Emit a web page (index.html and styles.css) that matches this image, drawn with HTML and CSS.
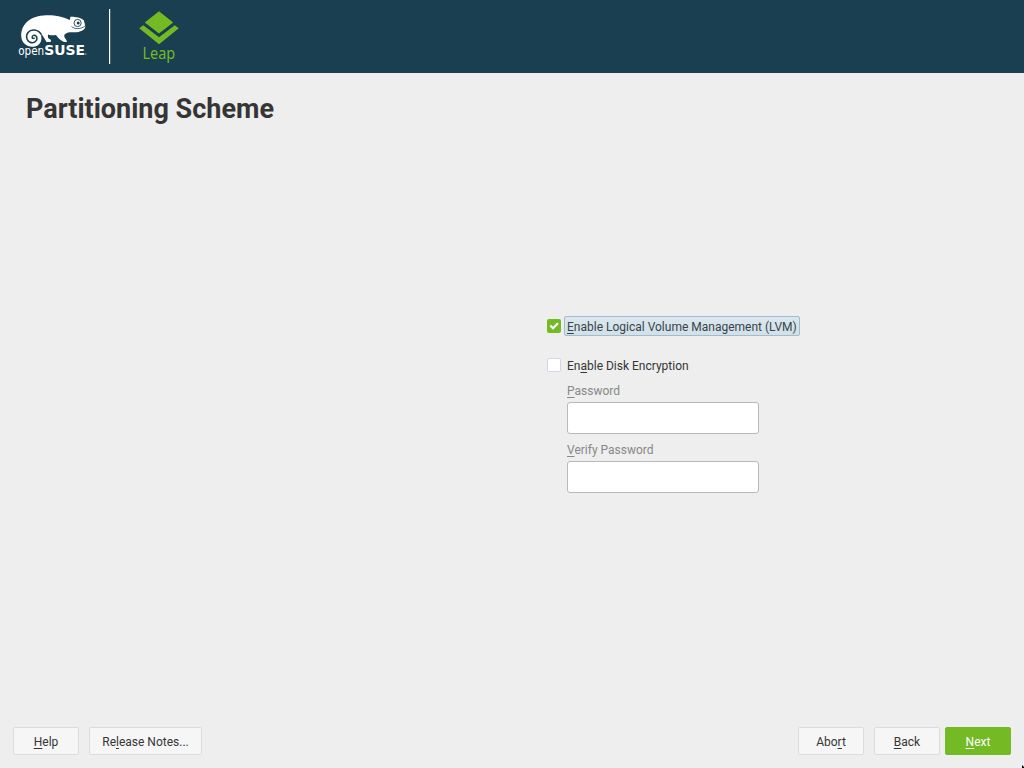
FILE: index.html
```html
<!DOCTYPE html>
<html lang="en">
<head>
<meta charset="utf-8">
<title>Partitioning Scheme</title>
<link rel="stylesheet" href="styles.css">
</head>
<body>
<header class="banner">
  <svg class="brand" width="200" height="72" viewBox="0 0 200 72" role="img" aria-label="openSUSE Leap">
    <path class="white" d="M21.300 37C20.500 24 31 15.600 46 15.300C56 15.100 63 16.800 70 20L70.300 16.800C75 16.600 81 17.800 83.800 20.200C84.200 22.500 85.500 25 85.200 27.500C83.500 31 79 32.300 75 32.200C70 32 66 32 64.300 35C63.800 37.500 66.200 38.500 67 42L64 42C61 40.500 58 38.500 56 35C53 35.500 50.500 35.500 48 34.500C47.500 37 48 39 50.500 39.500C51.200 40.500 51 41.500 50.500 42L46.500 42C44.500 39 43 35 40.500 33.500C43.500 41 39 47 32.500 46.800C26 46.500 21.800 42.500 21.300 37Z"/>
    <path class="spiral" d="M41 34C37.500 29 31 28.800 28 32.500C24.800 37 27.500 42.400 32 42.700C36.200 42.800 38.200 38.600 36 36C34.500 34.300 31.800 35.500 32.200 37.500C32.400 38.400 33.300 38.800 34.200 38.200"/>
    <circle class="eye" cx="77.600" cy="23" r="3.600"/>
    <circle class="pupil" cx="78.200" cy="22.900" r="1.500"/>
    <path class="mouth" d="M71.500 26.500C74.500 29.300 80.500 29.300 84.800 26.300"/>
    <text class="open" x="18.200" y="54.600" textLength="26" lengthAdjust="spacingAndGlyphs">open</text>
    <text class="suse" x="44.200" y="54.800" textLength="40.800" lengthAdjust="spacingAndGlyphs">SUSE</text>
    <circle class="white" cx="85.800" cy="54" r=".6"/>
    <rect class="white" x="109" y="9" width="1.200" height="55"/>
    <path class="green" d="M159 11.200L173.200 22.500L159 33.500L144.800 22.500ZM139.200 28.300L143.300 25.200L159 37.200L174.700 25.200L178.800 28.300L159 44.200Z"/>
    <text class="leap" x="142.400" y="59" textLength="32.800" lengthAdjust="spacingAndGlyphs">Leap</text>
  </svg>
</header>
<main class="content">
  <h1 class="title">Partitioning Scheme</h1>
  <form class="form">
    <div class="option lvm">
      <svg class="check checked" width="14" height="14" viewBox="0 0 14 14"><path d="M3.300 6.500L6 9.200L11 4.300"/></svg>
      <span class="label focused"><u>E</u>nable Logical Volume Management (LVM)</span>
    </div>
    <div class="option">
      <span class="check unchecked"></span>
      <span class="label">En<u>a</u>ble Disk Encryption</span>
    </div>
    <label class="field"><span><u>P</u>assword</span><input type="password" disabled></label>
    <label class="field"><span><u>V</u>erify Password</span><input type="password" disabled></label>
  </form>
</main>
<footer class="actions">
  <button class="button"><u>H</u>elp</button>
  <button class="button notes">Re<u>l</u>ease Notes...</button>
  <button class="button abort">Abo<u>r</u>t</button>
  <button class="button"><u>B</u>ack</button>
  <button class="button next"><u>N</u>ext</button>
</footer>
<svg class="cursor" width="2" height="3" viewBox="0 0 2 3"><path d="M0 0L2 2V3H0Z"/></svg>
</body>
</html>
```
FILE: styles.css
```css
* { box-sizing: border-box; }
body {
  margin: 0;
  width: 1024px;
  height: 768px;
  display: flex;
  flex-direction: column;
  overflow: hidden;
  background: #eeeeee;
  color: #353535;
  font: 12px/14px Roboto, sans-serif;
}
u {
  text-decoration: underline 1px;
  text-underline-offset: 2px;
  text-decoration-skip-ink: none;
}
.banner { height: 73px; flex: none; background: #1a3f50; }
.brand { display: block; }
.white { fill: #fff; }
.green, .leap { fill: #73ba25; }
.spiral { fill: none; stroke: #1a3f50; stroke-width: 1.5; stroke-linecap: round; }
.eye { fill: none; stroke: #1a3f50; stroke-width: .9; }
.pupil { fill: #1a3f50; }
.mouth { fill: none; stroke: #1a3f50; stroke-width: .8; }
.open { fill: #fff; font: 12px "DejaVu Sans", sans-serif; }
.suse { fill: #fff; font: bold 14px "DejaVu Sans", sans-serif; }
.leap { font: 15.5px "Noto Sans", sans-serif; }
.content { flex: 1; padding: 20px 26px 0; }
.title { margin: 0; font: bold 27px/33px Roboto, sans-serif; }
.form { margin: 189px 0 0 521px; width: 253px; }
.option { display: flex; align-items: center; height: 22px; gap: 3px; }
.lvm { margin-bottom: 17px; }
.check { flex: none; width: 14px; height: 14px; border-radius: 2px; }
.checked { background: #73ba25; }
.checked path { fill: none; stroke: #fff; stroke-width: 2.2; }
.unchecked { background: #fff; border: 1px solid #d0d7e7; }
.label { height: 20px; padding: 3px 2px 1px; border: 1px solid transparent; border-radius: 2px; white-space: nowrap; }
.focused { border-color: #a2bccc; background: linear-gradient(#dbe7ef, #d3e0e7); color: #37434b; }
.field { display: block; height: 59px; padding: 8px 0 0 20px; color: #888; }
.field span { display: block; height: 18px; }
.field input { display: block; width: 192px; height: 32px; margin: 0; border: 1px solid #b9b9b9; border-radius: 3px; background: #fff; }
.actions { display: flex; height: 41px; flex: none; padding: 0 13px; }
.button {
  width: 66px;
  height: 28px;
  margin: 0 10px 0 0;
  padding: 2px 0 0;
  border: 1px solid #dcdcdc;
  border-radius: 2px;
  background: #f6f6f6;
  color: #353535;
  font: 12px/14px Roboto, sans-serif;
}
.notes { width: 113px; }
.abort { margin-left: auto; }
.next { margin: 0 0 0 -5px; border-color: #73ba25; background: #73ba25; color: #fff; }
.cursor { position: absolute; left: 1022px; top: 765px; }
```
